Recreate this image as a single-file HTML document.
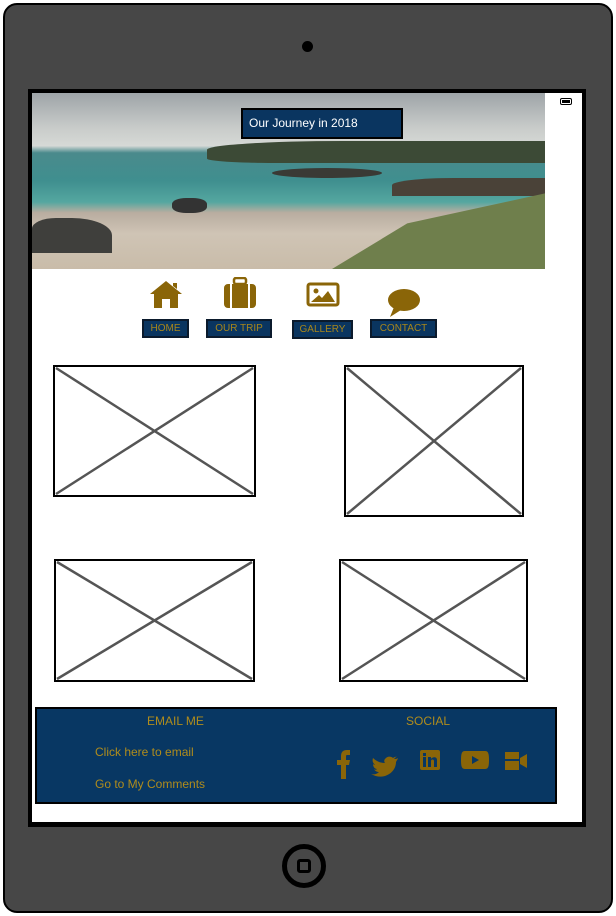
<!DOCTYPE html>
<html><head><style>
body{margin:0;width:616px;height:916px;background:#fff;position:relative;overflow:hidden;font-family:"Liberation Sans",sans-serif}
.a{position:absolute}
.nav{position:absolute;top:319px;height:19px;background:#0a3560;border:2px solid #0b1a2c;color:#a8861a;font-size:10px;line-height:16px;text-align:center;box-sizing:border-box}
.ft{color:#b08c1c;font-size:12px;position:absolute}
</style></head><body>
<div class="a" style="left:3px;top:3px;width:606px;height:906px;background:#474747;border:2px solid #000;border-radius:14px"></div>
<div class="a" style="left:302px;top:41px;width:11px;height:11px;border-radius:50%;background:#000"></div>
<div class="a" style="left:282px;top:844px;width:44px;height:44px;border-radius:50%;border:5px solid #000;box-sizing:border-box;background:#474747"></div>
<div class="a" style="left:297px;top:859px;width:14px;height:14px;border:3px solid #000;border-radius:3px;box-sizing:border-box"></div>
<div class="a" style="left:28px;top:89px;width:558px;height:738px;background:#000"></div>
<div class="a" style="left:32px;top:93px;width:550px;height:729px;background:#fff"></div>
<div class="a" style="left:560px;top:98px;width:12px;height:7px;border:1px solid #000;border-radius:2px;box-sizing:border-box;padding:1px"><div style="background:#000;width:100%;height:100%"></div></div>
<!-- hero -->
<div class="a" style="left:32px;top:93px;width:513px;height:176px;overflow:hidden;background:linear-gradient(#9ea4a8 0%,#c9ccca 20%,#d6d9d6 30%,#4a8a8c 34%,#3f8f8f 50%,#55a7a0 62%,#b9ada0 68%,#cfc4b5 80%,#c9bca9 100%)">
<div class="a" style="left:175px;top:48px;width:340px;height:22px;background:#3c4a36;border-radius:40% 0 0 20%"></div>
<div class="a" style="left:240px;top:75px;width:110px;height:10px;background:#3a3a35;border-radius:50%"></div>
<div class="a" style="left:360px;top:85px;width:155px;height:18px;background:#4a4238;border-radius:40% 0 0 0"></div>
<div class="a" style="left:300px;top:100px;width:215px;height:76px;background:#6f7f4c;clip-path:polygon(100% 0,100% 100%,0 100%,35% 40%)"></div>
<div class="a" style="left:0;top:125px;width:80px;height:35px;background:#3f3f3c;border-radius:30% 50% 0 0"></div>
<div class="a" style="left:140px;top:105px;width:35px;height:15px;background:#333;border-radius:40%"></div>
</div>
<div class="a" style="left:241px;top:108px;width:162px;height:31px;background:#0a3560;border:2px solid #000;box-sizing:border-box;color:#fff;font-size:12px;line-height:27px;padding-left:6px">Our Journey in 2018</div>
<!-- icons -->
<svg class="a" style="left:148px;top:279px" width="36" height="30" viewBox="0 0 36 30"><path d="M18 2 L2 15 H6 V29 H14 V20 H22 V29 H30 V15 H34 Z M25 4 H29 V10 L25 7Z" fill="#8a6508"/></svg>
<svg class="a" style="left:222px;top:277px" width="36" height="32" viewBox="0 0 36 32"><rect x="12" y="1" width="12" height="6" rx="2" fill="none" stroke="#8a6508" stroke-width="2.5"/><rect x="2" y="7" width="32" height="24" rx="4" fill="#8a6508"/><rect x="8" y="7" width="2" height="24" fill="#fff"/><rect x="26" y="7" width="2" height="24" fill="#fff"/></svg>
<svg class="a" style="left:306px;top:282px" width="34" height="26" viewBox="0 0 34 26"><rect x="2" y="2" width="30" height="21" rx="2" fill="none" stroke="#8a6508" stroke-width="3"/><circle cx="10" cy="9" r="2.5" fill="#8a6508"/><path d="M5 20 L13 13 L16 16 L22 9 L29 20Z" fill="#8a6508"/></svg>
<svg class="a" style="left:386px;top:287px" width="36" height="30" viewBox="0 0 36 30"><ellipse cx="18" cy="13" rx="16" ry="11" fill="#8a6508"/><path d="M8 20 L4 30 L15 23Z" fill="#8a6508"/></svg>
<div class="nav" style="left:142px;width:47px">HOME</div>
<div class="nav" style="left:206px;width:66px">OUR TRIP</div>
<div class="nav" style="left:292px;width:61px;top:320px">GALLERY</div>
<div class="nav" style="left:370px;width:67px">CONTACT</div>
<!-- placeholders -->
<svg class="a" style="left:0;top:0" width="616" height="916">
<g fill="none" stroke="#555" stroke-width="2.5">
<line x1="56" y1="368" x2="253" y2="494"/><line x1="253" y1="368" x2="56" y2="494"/>
<line x1="347" y1="368" x2="521" y2="514"/><line x1="521" y1="368" x2="347" y2="514"/>
<line x1="57" y1="562" x2="252" y2="679"/><line x1="252" y1="562" x2="57" y2="679"/>
<line x1="342" y1="562" x2="525" y2="679"/><line x1="525" y1="562" x2="342" y2="679"/>
</g>
<g fill="none" stroke="#000" stroke-width="2">
<rect x="54" y="366" width="201" height="130"/><rect x="345" y="366" width="178" height="150"/>
<rect x="55" y="560" width="199" height="121"/><rect x="340" y="560" width="187" height="121"/>
</g></svg>
<!-- footer -->
<div class="a" style="left:35px;top:707px;width:522px;height:97px;background:#083763;border:2px solid #000;box-sizing:border-box"></div>
<div class="ft" style="left:147px;top:714px">EMAIL ME</div>
<div class="ft" style="left:406px;top:714px">SOCIAL</div>
<div class="ft" style="left:95px;top:745px">Click here to email</div>
<div class="ft" style="left:95px;top:777px">Go to My Comments</div>
<svg class="a" style="left:330px;top:748px" width="200" height="34" viewBox="0 0 200 34">
<g fill="#8a6508">
<path d="M11 31 V17 H7 V12 H11 V8 C11 4 13 2 17 2 H20 V7 H17 C16 7 16 8 16 9 V12 H20 L19 17 H16 V31Z"/>
<path d="M70 10 C69 11 67 11 66 11 C67 10 68 9 69 8 C68 9 66 9 65 10 C63 8 59 8 57 11 C56 12 56 14 57 15 C52 15 48 13 45 10 C44 13 45 15 47 17 C46 17 45 16 45 16 C45 19 47 21 49 21 C48 22 47 22 46 21 C47 23 49 24 51 24 C49 26 46 27 43 26 C55 33 68 25 68 14 C69 12 70 11 70 10Z" transform="translate(-2,0)"/>
<rect x="90" y="2" width="20" height="20" rx="2"/>
<path d="M135 3 H155 C158 3 159 5 159 12 C159 19 158 21 155 21 H135 C132 21 131 19 131 12 C131 5 132 3 135 3Z"/>
<path d="M175 4 H189 V22 H175Z M190 10 L197 6 V20 L190 16Z"/>
</g>
<g fill="#083763"><rect x="93" y="9" width="3" height="10"/><rect x="93" y="5" width="3" height="3"/><path d="M98 9 H101 V11 C102 9 107 8 107 12 V19 H104 V13 C104 11 101 11 101 13 V19 H98Z"/><path d="M142 8 L149 12 L142 16Z"/><rect x="175" y="11" width="14" height="2"/></g>
</svg>
</body></html>
